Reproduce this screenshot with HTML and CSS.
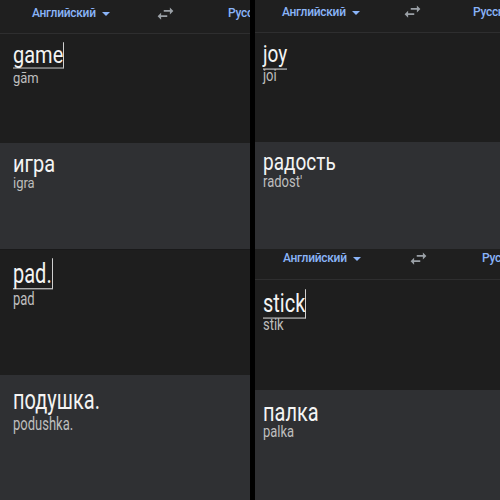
FILE: index.html
```html
<!DOCTYPE html>
<html lang="ru">
<head>
<meta charset="utf-8">
<link rel="stylesheet" href="styles.css">
</head>
<body>
<div class="collage">
  <div class="col col-left">
    <div class="header h-a">
      <div class="lang">Английский<span class="drop"></span></div>
      <svg class="swap" viewBox="0 0 24 24"><path d="M6.99 11L3 15l3.99 4v-3H14v-2H6.99v-3zM21 9l-4-4v3h-7v2h7v3l4-4z"/></svg>
      <div class="lang2">Русский</div>
    </div>
    <div class="src s-a">
      <div class="word"><span class="compose caret">game</span></div>
      <div class="translit">gām</div>
    </div>
    <div class="tgt t-a">
      <div class="word">игра</div>
      <div class="translit">igra</div>
    </div>
    <div class="src s-b">
      <div class="word"><span class="compose caret">pad.</span></div>
      <div class="translit">pad</div>
    </div>
    <div class="tgt t-b">
      <div class="word">подушка.</div>
      <div class="translit">podushka.</div>
    </div>
  </div>
  <div class="col col-right">
    <div class="header h-b">
      <div class="lang">Английский<span class="drop"></span></div>
      <svg class="swap" viewBox="0 0 24 24"><path d="M6.99 11L3 15l3.99 4v-3H14v-2H6.99v-3zM21 9l-4-4v3h-7v2h7v3l4-4z"/></svg>
      <div class="lang2">Русский</div>
    </div>
    <div class="src s-c">
      <div class="word"><span class="compose">joy</span></div>
      <div class="translit">joi</div>
    </div>
    <div class="tgt t-c">
      <div class="word">радость</div>
      <div class="translit">radost'</div>
    </div>
    <div class="header h-c">
      <div class="lang">Английский<span class="drop"></span></div>
      <svg class="swap" viewBox="0 0 24 24"><path d="M6.99 11L3 15l3.99 4v-3H14v-2H6.99v-3zM21 9l-4-4v3h-7v2h7v3l4-4z"/></svg>
      <div class="lang2">Русский</div>
    </div>
    <div class="src s-d">
      <div class="word"><span class="compose caret">stick</span></div>
      <div class="translit">stik</div>
    </div>
    <div class="tgt t-d">
      <div class="word">палка</div>
      <div class="translit">palka</div>
    </div>
  </div>
</div>
</body>
</html>
```

FILE: styles.css
```css
html, body {
  margin: 0;
  padding: 0;
  background: #000;
}
body {
  width: 500px;
  height: 500px;
  overflow: hidden;
  font-family: Roboto, "Noto Sans", sans-serif;
}
.collage {
  display: grid;
  grid-template-columns: 250px 245px;
  column-gap: 5px;
  height: 500px;
}
.col {
  display: flex;
  flex-direction: column;
  overflow: hidden;
  min-width: 0;
}

/* language bar */
.header {
  display: grid;
  align-items: start;
  background: #1f1f1f;
  border-bottom: 1px solid #2e2e2f;
  white-space: nowrap;
  flex: none;
  box-sizing: border-box;
}
.lang, .lang2 {
  color: #8ab4f8;
  font-size: 12px;
  font-weight: 500;
  letter-spacing: -0.3px;
  line-height: 16px;
  display: flex;
  align-items: center;
}
.drop {
  display: inline-block;
  width: 0;
  height: 0;
  border-left: 4px solid transparent;
  border-right: 4px solid transparent;
  border-top: 4px solid #8ab4f8;
  margin-left: 6px;
  margin-top: 1px;
}
.swap {
  width: 21px;
  height: 21px;
  fill: #9aa0a6;
}
.h-a {
  height: 34px;
  padding: 5px 0 0 32px;
  grid-template-columns: 123px 21px auto;
}
.h-a .swap { margin-top: -2px; }
.h-a .lang2 { margin-left: 52px; }
.h-b {
  height: 33px;
  padding: 4px 0 0 27px;
  grid-template-columns: 120px 21px auto;
}
.h-b .swap { margin-top: -3px; }
.h-b .lang2 { margin-left: 50px; }
.h-c {
  height: 31px;
  padding: 1px 0 0 28px;
  grid-template-columns: 125px 21px auto;
}
.h-c .swap { margin-top: -2px; }
.h-c .lang2 { margin-left: 53px; }

/* text panes */
.src, .tgt {
  flex: none;
  box-sizing: border-box;
  padding-left: 13px;
}
.col-right .src, .col-right .tgt { padding-left: 8px; }
.src { background: #1e1e1e; }
.tgt { background: #2f3033; }
.word {
  color: #f4f4f4;
  font-size: 20px;
  line-height: 24px;
  white-space: nowrap;
  transform-origin: left top;
}
.compose {
  display: inline-block;
  line-height: 22px;
  border-bottom: 1px solid #b5b5b5;
}
.compose.caret {
  border-right: 1px solid #cfcfcf;
}
.translit {
  color: #bebebe;
  font-size: 13px;
  line-height: 16px;
  transform-origin: left top;
}

/* top-left */
.s-a { height: 109px; padding-top: 7px; }
.t-a { height: 106px; padding-top: 7px; }
.s-a .word, .t-a .word { transform: scaleY(1.15); }
.s-a .translit, .t-a .translit { transform: scaleY(1.15); }
.s-a .translit { margin-top: 4px; }
.t-a .translit { margin-top: 0; }

/* bottom-left */
.s-b { height: 126px; padding-top: 7px; border-top: 1px solid #19191a; }
.t-b { flex: 1; padding-top: 8px; }
.s-b .word, .t-b .word { transform: scaleY(1.35); }
.s-b .translit, .t-b .translit { transform: scaleY(1.35); }
.s-b .translit { margin-top: 8px; }
.t-b .translit { margin-top: 7px; }

/* top-right */
.s-c { height: 109px; padding-top: 6px; }
.t-c { height: 107px; padding-top: 5px; }
.s-c .word, .t-c .word { font-size: 19px; transform: scaleY(1.28); }
.s-c .translit, .t-c .translit { transform: scaleY(1.28); }
.s-c .translit { margin-top: 3px; }
.t-c .translit { margin-top: 1px; }

/* bottom-right */
.s-d { height: 110px; padding-top: 8px; }
.t-d { flex: 1; padding-top: 7px; }
.s-d .word, .t-d .word { transform: scaleY(1.28); }
.s-d .translit, .t-d .translit { transform: scaleY(1.28); }
.s-d .translit { margin-top: 3px; }
.t-d .translit { margin-top: 1px; }
```
